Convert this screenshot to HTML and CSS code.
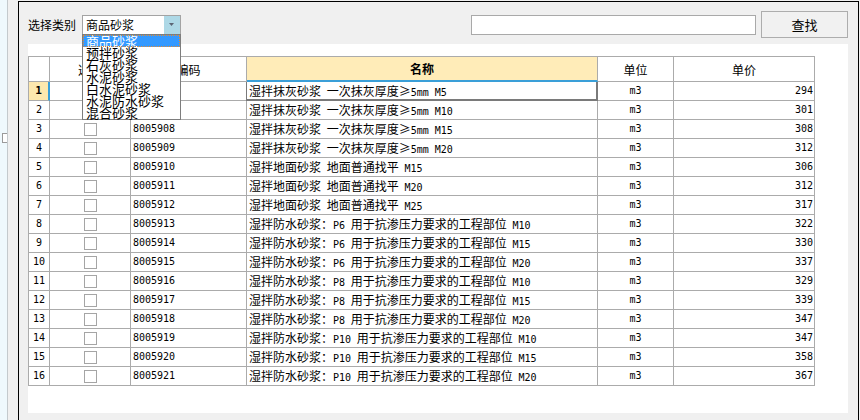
FILE: index.html
```html
<!DOCTYPE html>
<html lang="zh-CN">
<head>
<meta charset="utf-8">
<title>选择类别</title>
<link rel="stylesheet" href="styles.css">
</head>
<body>
<div class="desk">
  <div class="side"><div class="side-box"></div></div>
  <div class="side-line"></div>
  <div class="gutter"></div>
  <div class="window">
    <div class="toolbar">
      <span class="label">选择类别</span>
      <div class="combo">
        <span class="combo-text">商品砂浆</span>
        <span class="combo-btn"><svg width="5" height="3" viewBox="0 0 5 3"><polygon points="0,0 5,0 2.5,3" fill="#5b6473"/></svg></span>
        <ul class="combo-list">
          <li class="sel">商品砂浆</li>
          <li>预拌砂浆</li>
          <li>石灰砂浆</li>
          <li>水泥砂浆</li>
          <li>白水泥砂浆</li>
          <li>水泥防水砂浆</li>
          <li>混合砂浆</li>
        </ul>
      </div>
      <div class="spacer"></div>
      <input class="search" type="text">
      <button class="find">查找</button>
    </div>
    <div class="panel">
      <div class="grid">
        <div class="h"></div><div class="h">选择</div><div class="h">编码</div><div class="h hsel">名称</div><div class="h">单位</div><div class="h">单价</div>

        <div class="c num cur-row">1</div><div class="c chk"><span class="cb"></span></div><div class="c code">8005906</div><div class="c name cur">湿拌抹灰砂浆 一次抹灰厚度≥<span class="en">5mm M5</span></div><div class="c unit">m3</div><div class="c price">294</div>
        <div class="c num">2</div><div class="c chk"><span class="cb"></span></div><div class="c code">8005907</div><div class="c name">湿拌抹灰砂浆 一次抹灰厚度≥<span class="en">5mm M10</span></div><div class="c unit">m3</div><div class="c price">301</div>
        <div class="c num">3</div><div class="c chk"><span class="cb"></span></div><div class="c code">8005908</div><div class="c name">湿拌抹灰砂浆 一次抹灰厚度≥<span class="en">5mm M15</span></div><div class="c unit">m3</div><div class="c price">308</div>
        <div class="c num">4</div><div class="c chk"><span class="cb"></span></div><div class="c code">8005909</div><div class="c name">湿拌抹灰砂浆 一次抹灰厚度≥<span class="en">5mm M20</span></div><div class="c unit">m3</div><div class="c price">312</div>
        <div class="c num">5</div><div class="c chk"><span class="cb"></span></div><div class="c code">8005910</div><div class="c name">湿拌地面砂浆 地面普通找平 <span class="en">M15</span></div><div class="c unit">m3</div><div class="c price">306</div>
        <div class="c num">6</div><div class="c chk"><span class="cb"></span></div><div class="c code">8005911</div><div class="c name">湿拌地面砂浆 地面普通找平 <span class="en">M20</span></div><div class="c unit">m3</div><div class="c price">312</div>
        <div class="c num">7</div><div class="c chk"><span class="cb"></span></div><div class="c code">8005912</div><div class="c name">湿拌地面砂浆 地面普通找平 <span class="en">M25</span></div><div class="c unit">m3</div><div class="c price">317</div>
        <div class="c num">8</div><div class="c chk"><span class="cb"></span></div><div class="c code">8005913</div><div class="c name">湿拌防水砂浆：<span class="en">P6</span> 用于抗渗压力要求的工程部位 <span class="en">M10</span></div><div class="c unit">m3</div><div class="c price">322</div>
        <div class="c num">9</div><div class="c chk"><span class="cb"></span></div><div class="c code">8005914</div><div class="c name">湿拌防水砂浆：<span class="en">P6</span> 用于抗渗压力要求的工程部位 <span class="en">M15</span></div><div class="c unit">m3</div><div class="c price">330</div>
        <div class="c num">10</div><div class="c chk"><span class="cb"></span></div><div class="c code">8005915</div><div class="c name">湿拌防水砂浆：<span class="en">P6</span> 用于抗渗压力要求的工程部位 <span class="en">M20</span></div><div class="c unit">m3</div><div class="c price">337</div>
        <div class="c num">11</div><div class="c chk"><span class="cb"></span></div><div class="c code">8005916</div><div class="c name">湿拌防水砂浆：<span class="en">P8</span> 用于抗渗压力要求的工程部位 <span class="en">M10</span></div><div class="c unit">m3</div><div class="c price">329</div>
        <div class="c num">12</div><div class="c chk"><span class="cb"></span></div><div class="c code">8005917</div><div class="c name">湿拌防水砂浆：<span class="en">P8</span> 用于抗渗压力要求的工程部位 <span class="en">M15</span></div><div class="c unit">m3</div><div class="c price">339</div>
        <div class="c num">13</div><div class="c chk"><span class="cb"></span></div><div class="c code">8005918</div><div class="c name">湿拌防水砂浆：<span class="en">P8</span> 用于抗渗压力要求的工程部位 <span class="en">M20</span></div><div class="c unit">m3</div><div class="c price">347</div>
        <div class="c num">14</div><div class="c chk"><span class="cb"></span></div><div class="c code">8005919</div><div class="c name">湿拌防水砂浆：<span class="en">P10</span> 用于抗渗压力要求的工程部位 <span class="en">M10</span></div><div class="c unit">m3</div><div class="c price">347</div>
        <div class="c num">15</div><div class="c chk"><span class="cb"></span></div><div class="c code">8005920</div><div class="c name">湿拌防水砂浆：<span class="en">P10</span> 用于抗渗压力要求的工程部位 <span class="en">M15</span></div><div class="c unit">m3</div><div class="c price">358</div>
        <div class="c num">16</div><div class="c chk"><span class="cb"></span></div><div class="c code">8005921</div><div class="c name">湿拌防水砂浆：<span class="en">P10</span> 用于抗渗压力要求的工程部位 <span class="en">M20</span></div><div class="c unit">m3</div><div class="c price">367</div>
      </div>
    </div>
  </div>
</div>
</body>
</html>
```
FILE: styles.css
```css
html, body {
  margin: 0;
  padding: 0;
  height: 420px;
  overflow: hidden;
  background: #f0f0f0;
  font-family: "Noto Sans CJK SC", "Liberation Sans", sans-serif;
  font-size: 12px;
  color: #000;
}

.desk {
  display: flex;
  height: 420px;
}

.side {
  width: 7px;
  background: #eff9fd;
  padding-top: 133px;
  box-sizing: border-box;
}

.side-box {
  width: 4px;
  height: 8px;
  margin-left: 2px;
  border: 1px solid #9a9a9a;
  border-right: 0;
  background: #fff;
}

.side-line {
  width: 1px;
  background: #c4cacd;
}

.gutter {
  width: 10px;
  background: #f0f0f0;
}

.window {
  width: 841px;
  margin-top: 1px;
  box-sizing: border-box;
  border-left: 1px solid #000;
  border-top: 1px solid #000;
  border-right: 1px solid #000;
  background: #f0f0f0;
  display: flex;
  flex-direction: column;
}

/* toolbar */
.toolbar {
  display: flex;
  align-items: center;
  height: 27px;
  padding: 9px 10px 0 9px;
}

.label {
  width: 48px;
  margin-right: 6px;
  line-height: 20px;
  white-space: nowrap;
}

.combo {
  position: relative;
  width: 99px;
  height: 20px;
  box-sizing: border-box;
  border: 1px solid #a3a3a3;
  background: #fff;
  display: flex;
}

.combo-text {
  flex: 1;
  padding-left: 3px;
  line-height: 18px;
  font-size: 12px;
}

.combo-btn {
  width: 16px;
  background: #add8e6;
  display: flex;
  align-items: center;
  justify-content: center;
}

.combo-btn svg {
  display: block;
  margin-left: -1px;
}

.combo-list {
  position: absolute;
  z-index: 10;
  left: -1px;
  top: 18px;
  width: 99px;
  margin: 0;
  padding: 0;
  list-style: none;
  box-sizing: border-box;
  border: 1px solid #7d7d7d;
  background: #fff;
}

.combo-list li {
  height: 12px;
  line-height: 12px;
  padding-left: 3px;
  font-size: 13px;
  white-space: nowrap;
}

.combo-list li.sel {
  background: #3399ff;
  color: #fff;
  outline: 1px dotted #e08a35;
  outline-offset: -1px;
}

.spacer {
  flex: 1;
}

.search {
  width: 285px;
  height: 20px;
  box-sizing: border-box;
  margin: 0 5px 0 0;
  padding: 0;
  border: 1px solid #a9a9a9;
  background: #fff;
  outline: none;
}

.find {
  width: 87px;
  height: 27px;
  box-sizing: border-box;
  margin: 0;
  padding: 0;
  border: 1px solid #adadad;
  background: #f1f1f1;
  font-family: "Noto Sans CJK SC", sans-serif;
  font-size: 13px;
  color: #000;
}

/* panel & grid */
.panel {
  margin: 6px 10px 0 9px;
  height: 369px;
  box-sizing: border-box;
  padding-top: 12px;
  background: #fff;
}

.grid {
  display: grid;
  grid-template-columns: 21px 81px 116px 351px 76px 141px;
  grid-template-rows: 25px;
  grid-auto-rows: 19px;
  width: max-content;
  border-left: 1px solid #ababab;
  border-top: 1px solid #ababab;
}

.h, .c {
  box-sizing: border-box;
  border-right: 1px solid #ababab;
  border-bottom: 1px solid #ababab;
  white-space: nowrap;
  overflow: hidden;
}

.h {
  text-align: center;
  line-height: 25px;
  font-size: 12px;
  background: #fff;
}

.h.hsel {
  background: #ffecb8;
  font-weight: bold;
  border-bottom: 2px solid #3a9fd8;
  line-height: 24px;
}

.c {
  line-height: 18px;
}

.num {
  text-align: center;
  font-family: "DejaVu Sans Mono", monospace;
  font-size: 10px;
}

.num.cur-row {
  background: #fde8ae;
  border-right: 2px solid #3a9fd8;
  font-weight: bold;
  font-size: 11px;
}

.chk {
  display: flex;
  align-items: center;
  justify-content: center;
}

.cb {
  display: block;
  width: 13px;
  height: 13px;
  box-sizing: border-box;
  border: 1px solid #a5a5a5;
  background: #fff;
}

.code {
  padding-left: 2px;
  font-family: "DejaVu Sans Mono", monospace;
  font-size: 10px;
}

.name {
  padding-left: 2px;
  word-spacing: 3px;
}

.name.cur {
  border-right: 2px solid #7a7a7a;
  border-bottom: 2px solid #7a7a7a;
  box-shadow: -1px 0 0 #7a7a7a;
  line-height: 17px;
}

.en {
  font-family: "DejaVu Sans Mono", monospace;
  font-size: 10px;
  word-spacing: 0;
}

.unit {
  text-align: center;
  font-family: "DejaVu Sans Mono", monospace;
  font-size: 10px;
}

.price {
  text-align: right;
  padding-right: 1px;
  font-family: "DejaVu Sans Mono", monospace;
  font-size: 10px;
}
```
